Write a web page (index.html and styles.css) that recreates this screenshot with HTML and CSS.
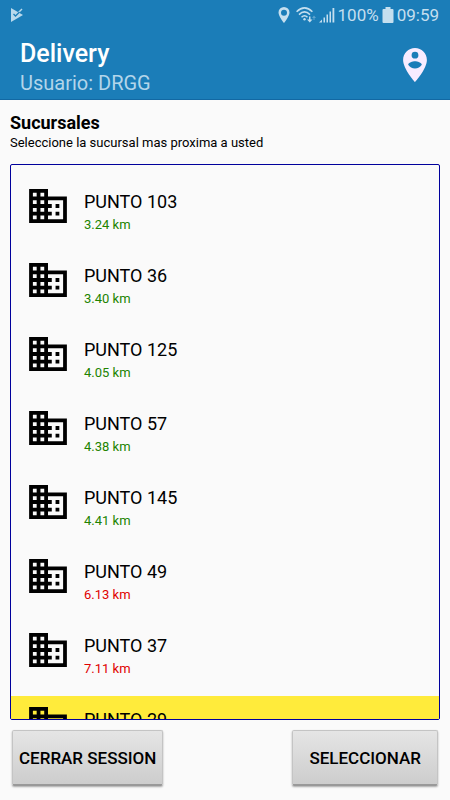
FILE: index.html
```html
<!DOCTYPE html>
<html lang="es">
<head>
<meta charset="utf-8">
<meta name="viewport" content="width=device-width, initial-scale=1">
<title>Delivery</title>
<link rel="stylesheet" href="styles.css">
</head>
<body>
<svg class="sprite">
  <symbol id="domain" viewBox="2 3 20 18"><path d="M18,15H16V17H18M18,11H16V13H18M20,19H12V17H14V15H12V13H14V11H12V9H20M10,7H8V5H10M10,11H8V9H10M10,15H8V13H10M10,19H8V17H10M6,7H4V5H6M6,11H4V9H6M6,15H4V13H6M6,19H4V17H6M12,7V3H2V21H22V7H12Z"/></symbol>
</svg>
<header class="header">
  <div class="status">
    <svg class="play" width="14" height="14" viewBox="0 0 14 14"><path d="M1 0L13 7L1 14Z" fill="#b9d9ec"/><path d="M8 5L12 1" stroke="#b9d9ec" stroke-width="1.500"/><path d="M3.500 6L5.500 8L9.500 4" fill="none" stroke="#1b7db8" stroke-width="1.300"/></svg>
    <div class="indicators">
      <svg width="12" height="16" viewBox="0 0 12 16"><path fill-rule="evenodd" d="M6 0A5.500 5.500 0 0 0 .5 5.500C.5 9.500 6 16 6 16S11.500 9.500 11.500 5.500A5.500 5.500 0 0 0 6 0ZM6 2.700A3 3 0 1 1 6 8.700A3 3 0 0 1 6 2.700Z"/></svg>
      <svg class="wifi" width="20" height="16" viewBox="0 0 20 16"><g fill="none" stroke="#c5dfef" stroke-width="1.500"><path d="M.6 4.800Q8.500-3 16.400 4.800M3 7.600Q8.500 2.200 14 7.600M5.500 10.200Q8.500 7.200 11.500 10.200"/></g><circle cx="8.500" cy="12.200" r="1.200"/><path d="M13 9.500v3h-2l2.800 3 2.700-3h-2v-3Z"/><path d="M17.500 13V11H16L18 8.500 20 11H18.500V13Z" opacity=".4"/></svg>
      <svg class="signal" width="16" height="16" viewBox="0 0 16 16"><path d="M0 15.500L3 12.500V15.500ZM4.500 10.500h1.500v5H4.500ZM7.500 7.500h1.500v8H7.500ZM10.500 4.500h1.500v11h-1.500ZM13.500 1h1.800v14.500h-1.800Z"/></svg>
      <span>100%</span>
      <svg width="12" height="16" viewBox="0 0 12 16"><path d="M3.500 0H8.500V2H10.500Q11.500 2 11.500 3V15Q11.500 16 10.500 16H1.500Q.5 16 .5 15V3Q.5 2 1.500 2H3.500Z"/></svg>
      <time>09:59</time>
    </div>
  </div>
  <div class="bar">
    <div class="titles">
      <h1 class="title">Delivery</h1>
      <p class="user">Usuario: DRGG</p>
    </div>
    <button class="locate" aria-label="Ubicación"><svg width="24" height="34" viewBox="5 2 14 20"><path fill="#f8ecff" fill-rule="evenodd" d="M12 2C8.140 2 5 5.140 5 9c0 5.250 7 13 7 13s7-7.750 7-13c0-3.860-3.140-7-7-7zm0 2.200a2 2 0 1 1 0 4a2 2 0 0 1 0-4zm0 9.800c-1.670 0-3.140-.85-4-2.150.02-1.320 2.670-2.050 4-2.050s3.980.73 4 2.050c-.86 1.300-2.330 2.150-4 2.150z"/></svg></button>
  </div>
</header>
<main class="content">
  <h2 class="heading">Sucursales</h2>
  <p class="hint">Seleccione la sucursal mas proxima a usted</p>
  <ul class="branches">
    <li><button class="branch"><svg class="building"><use href="#domain"/></svg><span class="name">PUNTO 103</span><span class="distance">3.24 km</span></button></li>
    <li><button class="branch"><svg class="building"><use href="#domain"/></svg><span class="name">PUNTO 36</span><span class="distance">3.40 km</span></button></li>
    <li><button class="branch"><svg class="building"><use href="#domain"/></svg><span class="name">PUNTO 125</span><span class="distance">4.05 km</span></button></li>
    <li><button class="branch"><svg class="building"><use href="#domain"/></svg><span class="name">PUNTO 57</span><span class="distance">4.38 km</span></button></li>
    <li><button class="branch"><svg class="building"><use href="#domain"/></svg><span class="name">PUNTO 145</span><span class="distance">4.41 km</span></button></li>
    <li><button class="branch"><svg class="building"><use href="#domain"/></svg><span class="name">PUNTO 49</span><span class="distance far">6.13 km</span></button></li>
    <li><button class="branch"><svg class="building"><use href="#domain"/></svg><span class="name">PUNTO 37</span><span class="distance far">7.11 km</span></button></li>
    <li><button class="branch selected"><svg class="building"><use href="#domain"/></svg><span class="name">PUNTO 29</span></button></li>
  </ul>
</main>
<footer class="actions">
  <button class="action">CERRAR SESSION</button>
  <button class="action wide">SELECCIONAR</button>
</footer>
</body>
</html>
```
FILE: styles.css
```css
* { box-sizing: border-box; }
body {
  margin: 0;
  height: 100vh;
  display: flex;
  flex-direction: column;
  background: #fafafa;
  color: #000;
  font-family: Roboto, "Liberation Sans", sans-serif;
}
h1, h2, p, ul { margin: 0; padding: 0; }
ul { list-style: none; }
button { font: inherit; color: inherit; cursor: pointer; }
.sprite { display: none; }
.header {
  background: #1b7db8;
  border-bottom: 1px solid #1268a3;
}
.status {
  display: flex;
  align-items: center;
  justify-content: space-between;
  height: 30px;
  padding: 0 11px 0 10px;
  color: #c5dfef;
  font-size: 17px;
}
.indicators { display: flex; align-items: center; gap: 3px; fill: #c5dfef; }
.wifi { margin-left: 3px; }
.bar {
  display: flex;
  align-items: center;
  justify-content: space-between;
  height: 69px;
  padding: 0 20px;
}
.titles { padding-top: 6px; }
.title { font-size: 25px; line-height: 30px; font-weight: 500; color: #fff; }
.user { font-size: 20px; line-height: 28px; color: #b3d5ea; }
.locate {
  display: flex;
  padding: 0 3px;
  border: 0;
  background: none;
}
.content {
  flex: 1;
  min-height: 0;
  display: flex;
  flex-direction: column;
  padding: 12px 10px 0;
}
.heading { font-size: 18px; line-height: 22px; font-weight: 700; }
.hint { font-size: 13px; line-height: 18px; margin-bottom: 12px; }
.branches {
  flex: 1;
  min-height: 0;
  overflow-y: auto;
  scrollbar-width: none;
  padding-top: 13px;
  border: 1px solid #00009c;
  border-radius: 2px;
}
.branch {
  display: grid;
  grid-template-columns: 38px 1fr;
  grid-template-rows: 26px 20px;
  column-gap: 17px;
  align-content: start;
  width: 100%;
  height: 74px;
  padding: 11px 18px;
  border: 0;
  background: none;
  text-align: left;
}
.selected { background: #ffeb3b; }
.building { grid-row: 1 / 3; width: 38px; height: 34px; }
.name { font-size: 18px; line-height: 26px; }
.distance { font-size: 13px; line-height: 20px; color: #218300; }
.far { color: #e00000; }
.actions {
  display: flex;
  justify-content: space-between;
  padding: 10px 12px 14px;
}
.action {
  height: 56px;
  padding: 0 6px;
  border: 1px solid #c4c4c4;
  border-bottom: 2px solid #999;
  border-radius: 2px;
  background: linear-gradient(#e5e5e5, #cdcdcd);
  box-shadow: 0 1px 2px #00000055;
  font-size: 17px;
  font-weight: 500;
}
.wide { padding: 0 16px; }
```
